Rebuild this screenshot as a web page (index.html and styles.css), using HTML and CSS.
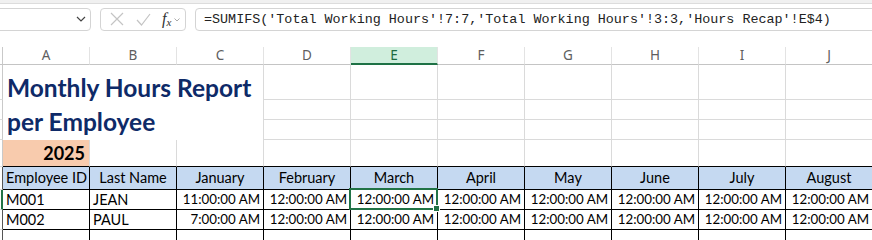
FILE: index.html
```html
<!DOCTYPE html>
<html lang="en">
<head>
    <meta charset="UTF-8">
    <title>Monthly Hours Report</title>
    <link rel="stylesheet" href="styles.css">
</head>
<body>

<div class="topband"></div>
<div class="toolbar">
    <div class="namebox">
        <svg class="chev" width="10" height="6" viewBox="0 0 10 6"><path d="M1 1l4 4 4-4" fill="none" stroke="#444" stroke-width="1.2"/></svg>
    </div>
    <div class="fxbtns">
        <svg width="14" height="14" viewBox="0 0 14 14"><path d="M1 1l12 12M13 1L1 13" stroke="#c4c4c4" stroke-width="1.2"/></svg>
        <svg width="15" height="13" viewBox="0 0 15 13"><path d="M1 7l4.5 5L14 1" fill="none" stroke="#c4c4c4" stroke-width="1.2"/></svg>
        <span class="fx">f<sub>x</sub></span>
        <svg class="mini" width="6" height="4" viewBox="0 0 6 4"><path d="M0.5 0.5l2.5 2.5 2.5-2.5" fill="none" stroke="#aaa" stroke-width="1"/></svg>
    </div>
    <div class="formula">=SUMIFS('Total Working Hours'!7:7,'Total Working Hours'!3:3,'Hours Recap'!E$4)</div>
</div>

<div class="sheet">
    <!-- column letters -->
    <div class="stub head"></div>
    <div class="colhead">A</div>
    <div class="colhead">B</div>
    <div class="colhead">C</div>
    <div class="colhead">D</div>
    <div class="colhead sel">E</div>
    <div class="colhead">F</div>
    <div class="colhead">G</div>
    <div class="colhead">H</div>
    <div class="colhead">I</div>
    <div class="colhead">J</div>

    <!-- rows 1-3 -->
    <div class="stub r1"></div>
    <div class="title">Monthly Hours Report<br>per Employee</div>
    <div class="c"></div><div class="c"></div><div class="c"></div><div class="c"></div><div class="c"></div><div class="c"></div><div class="c"></div>
    <div class="stub"></div>
    <div class="c"></div><div class="c"></div><div class="c"></div><div class="c"></div><div class="c"></div><div class="c"></div><div class="c"></div>
    <div class="stub"></div>
    <div class="c"></div><div class="c"></div><div class="c"></div><div class="c"></div><div class="c"></div><div class="c"></div><div class="c"></div>

    <!-- row 4 -->
    <div class="stub"></div>
    <div class="c above year">2025</div>
    <div class="c above"></div><div class="c above"></div><div class="c above"></div><div class="c above"></div><div class="c above"></div>
    <div class="c above"></div><div class="c above"></div><div class="c above"></div><div class="c above"></div>

    <!-- table header -->
    <div class="stub tb"></div>
    <div class="t th left">Employee ID</div>
    <div class="t th">Last Name</div>
    <div class="t th">January</div>
    <div class="t th">February</div>
    <div class="t th">March</div>
    <div class="t th">April</div>
    <div class="t th">May</div>
    <div class="t th">June</div>
    <div class="t th">July</div>
    <div class="t th">August</div>

    <div class="stub tb active"></div>
    <div class="t">M001</div>
    <div class="t">JEAN</div>
    <div class="t num">11:00:00 AM</div>
    <div class="t num">12:00:00 AM</div>
    <div class="t num current">12:00:00 AM<span class="handle"></span></div>
    <div class="t num">12:00:00 AM</div>
    <div class="t num">12:00:00 AM</div>
    <div class="t num">12:00:00 AM</div>
    <div class="t num">12:00:00 AM</div>
    <div class="t num">12:00:00 AM</div>

    <div class="stub tb"></div>
    <div class="t">M002</div>
    <div class="t">PAUL</div>
    <div class="t num">7:00:00 AM</div>
    <div class="t num">12:00:00 AM</div>
    <div class="t num">12:00:00 AM</div>
    <div class="t num">12:00:00 AM</div>
    <div class="t num">12:00:00 AM</div>
    <div class="t num">12:00:00 AM</div>
    <div class="t num">12:00:00 AM</div>
    <div class="t num">12:00:00 AM</div>

    <div class="stub tb"></div>
    <div class="t"></div><div class="t"></div><div class="t"></div><div class="t"></div><div class="t"></div>
    <div class="t"></div><div class="t"></div><div class="t"></div><div class="t"></div><div class="t"></div>
</div>

</body>
</html>
```

FILE: styles.css
```css
body {
    margin: 0;
    padding: 0;
    width: 872px;
    height: 240px;
    overflow: hidden;
    background-color: #fff;
    font-family: Lato, "Liberation Sans", sans-serif;
}

.topband {
    height: 3px;
    background-color: #f0f0f0;
    border-bottom: 1px solid #dcdcdc;
}

.toolbar {
    display: flex;
    align-items: center;
    height: 28px;
    padding-top: 1px;
}

.namebox {
    box-sizing: border-box;
    width: 97px;
    height: 23px;
    margin-left: -6px;
    border: 1px solid #d4d4d4;
    border-radius: 4px;
    display: flex;
    align-items: center;
    justify-content: flex-end;
    padding-right: 4px;
}

.fxbtns {
    box-sizing: border-box;
    width: 86px;
    height: 23px;
    margin-left: 9px;
    border: 1px solid #d4d4d4;
    border-radius: 4px;
    display: flex;
    align-items: center;
    padding-left: 9px;
    gap: 12px;
}

.fx {
    font-family: "Liberation Serif", serif;
    font-style: italic;
    font-size: 16px;
    color: #333;
    margin-left: -1px;
}

.fx sub {
    font-size: 11px;
    vertical-align: -2px;
}

.mini {
    margin-left: -9px;
    margin-top: 2px;
}

.formula {
    box-sizing: border-box;
    flex: 1;
    height: 23px;
    margin-left: 9px;
    margin-right: -10px;
    border: 1px solid #d4d4d4;
    border-radius: 4px;
    padding-left: 8px;
    font-family: "Liberation Mono", monospace;
    font-size: 13.4px;
    line-height: 21px;
    color: #222;
    white-space: nowrap;
    overflow: hidden;
}

.sheet {
    display: grid;
    grid-template-columns: 3px repeat(10, 87px);
    grid-template-rows: 18px 35px 20px 20px 27px 23px 20px 20px 20px;
    margin-top: 14px;
    font-size: 14.5px;
    color: #000;
}

.sheet > div {
    box-sizing: border-box;
}

.stub {
    border-right: 1px solid #c9c9c9;
    border-bottom: 1px solid #dadada;
}

.stub.head {
    border-bottom: 1px solid #c4c4c4;
}

.stub.tb {
    border-right-color: #555;
}

.stub.active {
    border-right: 2px solid #217346;
}

.colhead {
    border-right: 1px solid #e3e3e3;
    border-bottom: 1px solid #c4c4c4;
    text-align: center;
    font-family: "Noto Sans", sans-serif;
    font-size: 13.5px;
    line-height: 17px;
    color: #5e5e5e;
}

.colhead.sel {
    background-color: #d0eedd;
    color: #1d6b40;
    border-bottom: 2px solid #1e7145;
}

.title {
    grid-column: 2 / 5;
    grid-row: 2 / 5;
    border-right: 1px solid #dadada;
    padding: 6px 0 0 4px;
    font-size: 24.5px;
    font-weight: bold;
    line-height: 34px;
    color: #0e2a68;
    white-space: nowrap;
}

.c {
    border-right: 1px solid #dadada;
    border-bottom: 1px solid #dadada;
}

.c.above {
    border-bottom-color: #000;
}

.year {
    background-color: #f8cbad;
    text-align: right;
    font-size: 18px;
    font-weight: bold;
    line-height: 26px;
    padding-right: 4px;
}

.t {
    border-right: 1px solid #000;
    border-bottom: 1px solid #000;
    padding: 0 3px;
    line-height: 19px;
    white-space: nowrap;
    overflow: hidden;
}

.th {
    background-color: #c5d9f1;
    text-align: center;
    line-height: 22px;
}

.th.left {
    text-align: left;
}

.num {
    text-align: right;
    font-size: 13.3px;
}

.current {
    position: relative;
    overflow: visible;
}

.current::after {
    content: '';
    position: absolute;
    left: -2px;
    top: -2px;
    right: -1px;
    bottom: -1px;
    border: 2px solid #217346;
}

.handle {
    position: absolute;
    right: -3px;
    bottom: -3px;
    width: 5px;
    height: 5px;
    background-color: #217346;
    border: 1px solid #fff;
    z-index: 2;
}
```
